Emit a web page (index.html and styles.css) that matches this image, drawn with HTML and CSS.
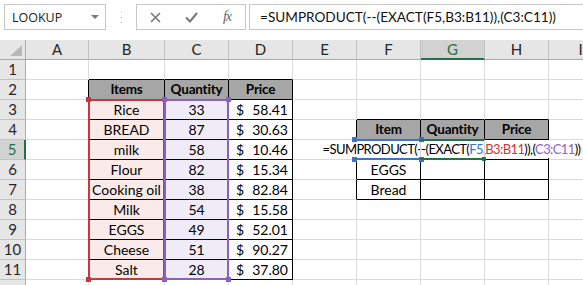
FILE: index.html
```html
<!DOCTYPE html>
<html lang="en">
<head>
    <meta charset="UTF-8">
    <title>SUMPRODUCT EXACT</title>
    <link rel="stylesheet" href="styles.css">
</head>
<body>
    <!-- Formula bar -->
    <div class="formula-bar">
        <div class="name-box">
            <span>LOOKUP</span>
            <svg width="8" height="4" viewBox="0 0 8 4"><path d="M0 0h8L4 4z" fill="#7a7a7a"/></svg>
        </div>
        <div class="grip">
            <svg width="3" height="11" viewBox="0 0 3 11"><rect x="1" y="0" width="1" height="1" fill="#b5b5b5"/><rect x="1" y="5" width="1" height="1" fill="#b5b5b5"/><rect x="1" y="10" width="1" height="1" fill="#b5b5b5"/></svg>
        </div>
        <div class="fx-buttons">
            <svg width="11" height="11" viewBox="0 0 11 11"><path d="M1 1l9 9M10 1l-9 9" stroke="#777" stroke-width="1.6"/></svg>
            <svg width="13" height="11" viewBox="0 0 13 11"><path d="M1 5.5l4 4 7-8.5" stroke="#777" stroke-width="2" fill="none"/></svg>
            <span class="fx">fx</span>
        </div>
        <div class="formula-input">=SUMPRODUCT(--(EXACT(F5,B3:B11)),(C3:C11))</div>
    </div>

    <!-- Sheet -->
    <div class="sheet">
        <div class="corner"><svg width="12" height="11" viewBox="0 0 12 11"><path d="M12 0v11H0z" fill="#b9b9b9"/></svg></div>
        <div class="ch">A</div><div class="ch">B</div><div class="ch">C</div><div class="ch">D</div><div class="ch">E</div><div class="ch">F</div><div class="ch sel">G</div><div class="ch">H</div><div class="ch">I</div>

        <div class="rh">1</div><div></div><div class="edge-b"></div><div class="edge-b"></div><div class="edge-b"></div><div></div><div></div><div></div><div></div><div></div>

        <div class="rh">2</div><div class="edge-r"></div><div class="th">Items</div><div class="th">Quantity</div><div class="th">Price</div><div></div><div></div><div></div><div></div><div></div>

        <div class="rh">3</div><div class="edge-r"></div><div class="td it">Rice</div><div class="td qt">33</div><div class="td pr"><span>$</span><span>58.41</span></div><div></div><div class="edge-b"></div><div class="edge-b"></div><div class="edge-b"></div><div></div>

        <div class="rh">4</div><div class="edge-r"></div><div class="td it">BREAD</div><div class="td qt">87</div><div class="td pr"><span>$</span><span>30.63</span></div><div class="edge-r"></div><div class="th">Item</div><div class="th">Quantity</div><div class="th">Price</div><div></div>

        <div class="rh sel">5</div><div class="edge-r"></div><div class="td it">milk</div><div class="td qt">58</div><div class="td pr"><span>$</span><span>10.46</span></div><div class="edge-r"></div><div class="td"></div><div class="td"></div><div class="td"></div><div></div>

        <div class="rh">6</div><div class="edge-r"></div><div class="td it">Flour</div><div class="td qt">82</div><div class="td pr"><span>$</span><span>15.34</span></div><div class="edge-r"></div><div class="td">EGGS</div><div class="td"></div><div class="td"></div><div></div>

        <div class="rh">7</div><div class="edge-r"></div><div class="td it">Cooking oil</div><div class="td qt">38</div><div class="td pr"><span>$</span><span>82.84</span></div><div class="edge-r"></div><div class="td">Bread</div><div class="td"></div><div class="td"></div><div></div>

        <div class="rh">8</div><div class="edge-r"></div><div class="td it">Milk</div><div class="td qt">54</div><div class="td pr"><span>$</span><span>15.58</span></div><div></div><div></div><div></div><div></div><div></div>

        <div class="rh">9</div><div class="edge-r"></div><div class="td it">EGGS</div><div class="td qt">49</div><div class="td pr"><span>$</span><span>52.01</span></div><div></div><div></div><div></div><div></div><div></div>

        <div class="rh">10</div><div class="edge-r"></div><div class="td it">Cheese</div><div class="td qt">51</div><div class="td pr"><span>$</span><span>90.27</span></div><div></div><div></div><div></div><div></div><div></div>

        <div class="rh">11</div><div class="edge-r"></div><div class="td it">Salt</div><div class="td qt">28</div><div class="td pr"><span>$</span><span>37.80</span></div><div></div><div></div><div></div><div></div><div></div>

        <div class="rh"></div><div></div><div></div><div></div><div></div><div></div><div></div><div></div><div></div><div></div>

        <!-- Overlays: range highlights and in-cell editor -->
        <div class="range red"><i class="h tl"></i><i class="h tr"></i><i class="h bl"></i><i class="h br"></i></div>
        <div class="range purple"><i class="h tl"></i><i class="h tr"></i><i class="h bl"></i><i class="h br"></i></div>
        <div class="editor">
            <span class="editor-text">=SUMPRODUCT(--(EXACT(<span class="ref-blue">F5</span>,<span class="ref-red">B3:B11</span>)),(<span class="ref-purple">C3:C11</span>))</span>
        </div>
        <div class="range blue"><i class="h tl"></i><i class="h tr"></i><i class="h bl"></i><i class="h br"></i></div>
        <div class="range active"><i class="h br"></i></div>
    </div>
</body>
</html>
```

FILE: styles.css
```css
* {
    margin: 0;
    padding: 0;
    box-sizing: border-box;
}

body {
    width: 583px;
    height: 285px;
    overflow: hidden;
    background: #fff;
    font-family: Lato, "Open Sans", sans-serif;
    color: #000;
}

/* Formula bar */
.formula-bar {
    height: 40px;
    display: flex;
    align-items: flex-start;
    padding: 4px 0 0 4px;
    background: #fff;
}

.name-box {
    flex-shrink: 0;
    width: 102px;
    height: 26px;
    border: 1px solid #c6c6c6;
    display: flex;
    align-items: center;
    justify-content: space-between;
    padding: 0 6px 0 7px;
    font-family: "Open Sans", sans-serif;
    font-size: 12.5px;
    color: #222;
}

.grip {
    flex-shrink: 0;
    width: 30px;
    height: 26px;
    display: flex;
    align-items: center;
    justify-content: center;
}

.fx-buttons {
    flex-shrink: 0;
    width: 110px;
    height: 26px;
    border: 1px solid #c6c6c6;
    display: grid;
    grid-template-columns: repeat(3, 1fr);
    align-items: center;
    justify-items: center;
}

.fx {
    font-family: "Liberation Serif", serif;
    font-style: italic;
    font-size: 14px;
    color: #666;
    letter-spacing: -1px;
}

.formula-input {
    flex: 1;
    min-width: 0;
    height: 26px;
    margin-left: 3px;
    border: 1px solid #c6c6c6;
    border-right: none;
    padding-left: 10px;
    font-size: 13.6px;
    line-height: 24px;
    white-space: nowrap;
    color: #111;
}

/* Sheet grid */
.sheet {
    position: relative;
    display: grid;
    grid-template-columns: 26px 63px 76px 64px 64px 64px 64px 64px 64px 64px;
    grid-template-rows: repeat(13, 20px);
    font-size: 14px;
    line-height: 19px;
}

.sheet > div {
    border-right: 1px solid #dadada;
    border-bottom: 1px solid #dadada;
    white-space: nowrap;
}

.sheet > .corner {
    background: #e6e6e6;
    border-right: 1px solid #ababab;
    border-bottom: 1px solid #ababab;
    display: flex;
    align-items: flex-end;
    justify-content: flex-end;
    padding: 0 3px 3px 0;
}

.sheet > .ch {
    background: #e6e6e6;
    border-right: 1px solid #c2c2c2;
    border-bottom: 1px solid #ababab;
    text-align: center;
    color: #262626;
    font-size: 15px;
}

.sheet > .rh {
    background: #e6e6e6;
    border-right: 1px solid #ababab;
    border-bottom: 1px solid #c2c2c2;
    text-align: center;
    color: #262626;
    font-size: 15px;
}

.sheet > .ch.sel {
    background: #d2d2d2;
    border-bottom: 2px solid #217346;
    color: #217346;
}

.sheet > .rh.sel {
    background: #d2d2d2;
    border-right: 2px solid #217346;
    color: #217346;
}

.sheet > .edge-r {
    border-right-color: #000;
}

.sheet > .edge-b {
    border-bottom-color: #000;
}

.sheet > .th {
    background: #a6a6a6;
    border-right-color: #000;
    border-bottom-color: #000;
    font-weight: bold;
    font-size: 13.5px;
    letter-spacing: -0.2px;
    text-align: center;
}

.sheet > .td {
    border-right-color: #000;
    border-bottom-color: #000;
    text-align: center;
}

.sheet > .it {
    background: #fbeaea;
}

.sheet > .qt {
    background: #efecf8;
}

.sheet > .pr {
    display: flex;
    justify-content: space-between;
    padding: 0 4px 0 7px;
}

/* Range highlights */
.range {
    position: absolute;
    inset: -1px 0 0 -1px;
    z-index: 2;
    pointer-events: none;
}

.range .h {
    position: absolute;
    width: 5px;
    height: 5px;
}

.h.tl { top: -4px; left: -4px; }
.h.tr { top: -4px; right: -4px; }
.h.bl { bottom: -4px; left: -4px; }
.h.br { bottom: -4px; right: -4px; }

.range.red {
    grid-column: 3 / 4;
    grid-row: 4 / 13;
    border: 2px solid #c3393f;
}

.range.red .h { background: #c3393f; }

.range.purple {
    grid-column: 4 / 5;
    grid-row: 4 / 13;
    border: 2px solid #8a61c1;
}

.range.purple .h { background: #8a61c1; }

.range.blue {
    grid-column: 7 / 8;
    grid-row: 6 / 7;
    border-top: 2px solid #3a73cf;
    border-bottom: 2px solid #3a73cf;
}

.range.blue .h { background: #3a73cf; }

.range.active {
    grid-column: 8 / 9;
    grid-row: 6 / 7;
    border-top: 2px solid #217346;
    border-bottom: 2px solid #217346;
}

.range.active .h {
    background: #217346;
    width: 4px;
    height: 4px;
    bottom: -3px;
    right: -2px;
}

/* In-cell editor */
.editor {
    position: absolute;
    grid-column: 8 / 9;
    grid-row: 6 / 7;
    inset: 0 0 1px 0;
    display: flex;
    justify-content: center;
    z-index: 1;
}

.editor-text {
    flex-shrink: 0;
    background: #fff;
    padding: 0 4px 0 3px;
    font-size: 13px;
    letter-spacing: -0.6px;
    white-space: nowrap;
    border-right: 1px solid #000;
}

.ref-blue { color: #3a73cf; }
.ref-red { color: #d2343a; }
.ref-purple { color: #8f62c8; }
```
